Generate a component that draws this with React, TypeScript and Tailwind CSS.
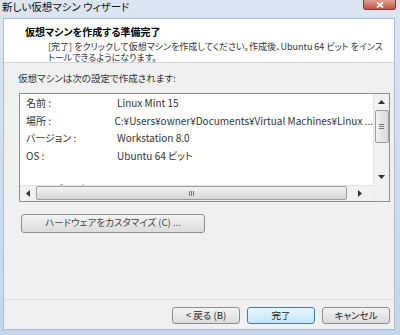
import React from "react";

const rows = [
  { label: "名前 :", value: "Linux Mint 15" },
  { label: "場所 :", value: "C:¥Users¥owner¥Documents¥Virtual Machines¥Linux ..." },
  { label: "バージョン :", value: "Workstation 8.0" },
  { label: "OS :", value: "Ubuntu 64 ビット" },
];

function Arrow({ dir }: { dir: "up" | "down" | "left" | "right" }) {
  const pts = {
    up: "0,4 3.5,0 7,4",
    down: "0,0 3.5,4 7,0",
    left: "4,0 0,3.5 4,7",
    right: "0,0 4,3.5 0,7",
  }[dir];
  const vertical = dir === "up" || dir === "down";
  return (
    <svg width={vertical ? 7 : 4} height={vertical ? 4 : 7} viewBox={vertical ? "0 0 7 4" : "0 0 4 7"}>
      <polygon points={pts} fill="#333" />
    </svg>
  );
}

function Button({ children, primary, className }: { children: React.ReactNode; primary?: boolean; className?: string }) {
  return (
    <div
      className={
        "flex items-center justify-center rounded-[3px] border text-[#222] " +
        (primary
          ? "border-[#3c7fb1] bg-gradient-to-b from-[#eaf6fd] to-[#bee6fd] "
          : "border-[#8e8f8f] bg-gradient-to-b from-[#f4f4f4] to-[#dcdcdc] ") +
        (className ?? "")
      }
    >
      {children}
    </div>
  );
}

export default function App() {
  return (
    <div className="w-[400px] h-[335px] overflow-hidden flex flex-col bg-gradient-to-b from-[#dbe6f2] to-[#c3d6ec] text-[10px] leading-none text-[#1a1a1a] [font-family:'Noto_Sans_CJK_JP',sans-serif] [font-feature-settings:'palt']">
      {/* title bar */}
      <div className="h-[18px] shrink-0 flex justify-between">
        <div className="pl-[2px] pt-[2px] text-[10.5px] text-[#111]">新しい仮想マシン ウィザード</div>
        <div className="mr-[4px] w-[33px] h-[10px] rounded-b-[3px] border border-t-0 border-[#8c3a2f] bg-gradient-to-b from-[#e0a196] to-[#c6503d] flex items-center justify-center">
          <svg width="8" height="6" viewBox="0 0 8 6">
            <path d="M1 0.5 L7 5.5 M7 0.5 L1 5.5" stroke="#fff" strokeWidth="1.8" />
          </svg>
        </div>
      </div>

      <div className="ml-[3px] mr-[5px] mb-[5px] flex-1 flex flex-col bg-[#f0f0f0] border border-[#a9bed6]">
        {/* header */}
        <div className="h-[44px] shrink-0 overflow-hidden bg-white border-b border-[#d5d5d5] pt-[8px]">
          <div className="pl-[21px] font-bold text-[10px] text-black">仮想マシンを作成する準備完了</div>
          <div className="pl-[44px] pt-[4px] text-[9px] leading-[11px] text-[#333] whitespace-nowrap">
            [完了] をクリックして仮想マシンを作成してください。作成後、Ubuntu 64 ビット をインス
            <br />
            トールできるようになります。
          </div>
        </div>

        {/* body */}
        <div className="flex-1 flex flex-col pl-[13px] pr-[4px]">
          <div className="pt-[11px] pl-[1px] text-[9.5px] text-[#333]">仮想マシンは次の設定で作成されます:</div>
          <div className="mt-[9px] ml-[2px] h-[109px] border border-[#8e8f8f] bg-white grid grid-cols-[1fr_16px] grid-rows-[1fr_16px]">
            <div className="overflow-hidden pl-[6px] pt-[1px]">
              {rows.map((r, i) => (
                <div key={i} className="h-[17.5px] flex items-center whitespace-nowrap text-[10px] text-[#333]">
                  <span className="w-[91px]">{r.label}</span>
                  <span>{r.value}</span>
                </div>
              ))}
              <div className="h-[16px]" />
              <div className="h-[17.5px] flex items-center whitespace-nowrap text-[10px] text-[#333]">
                <span className="w-[91px]">ハードディスク :</span>
                <span>20 GB</span>
              </div>
            </div>
            {/* vertical scrollbar */}
            <div className="bg-[#f1f1f1] border-l border-[#e4e4e4] flex flex-col items-center">
              <div className="h-[16px] flex items-center justify-center">
                <Arrow dir="up" />
              </div>
              <div className="w-[14px] h-[33px] rounded-[2px] border border-[#9c9c9c] bg-gradient-to-r from-[#f2f2f2] to-[#d8d8d8] flex flex-col items-center justify-center gap-[1px]">
                <div className="w-[5px] h-px bg-[#777]" />
                <div className="w-[5px] h-px bg-[#777]" />
                <div className="w-[5px] h-px bg-[#777]" />
              </div>
              <div className="flex-1" />
              <div className="h-[16px] flex items-center justify-center">
                <Arrow dir="down" />
              </div>
            </div>
            {/* horizontal scrollbar */}
            <div className="bg-[#f1f1f1] border-t border-[#e4e4e4] flex items-center">
              <div className="w-[16px] flex items-center justify-center">
                <Arrow dir="left" />
              </div>
              <div className="w-[311px] h-[14px] rounded-[2px] border border-[#9c9c9c] bg-gradient-to-b from-[#f4f4f4] to-[#d6d6d6] flex items-center justify-center gap-[1px]">
                <div className="w-px h-[5px] bg-[#777]" />
                <div className="w-px h-[5px] bg-[#777]" />
                <div className="w-px h-[5px] bg-[#777]" />
              </div>
              <div className="flex-1 flex items-center justify-center">
                <Arrow dir="right" />
              </div>
            </div>
            <div className="bg-[#f0f0f0]" />
          </div>

          <Button className="mt-[12px] ml-[4px] w-[184px] h-[19px] text-[9.5px] text-[#444]">
            ハードウェアをカスタマイズ (C) ...
          </Button>
        </div>

        {/* footer */}
        <div className="h-[30px] shrink-0 border-t border-[#dfdfdf] flex items-start justify-end gap-[7px] pt-[7px] pr-[4px]">
          <Button className="w-[68px] h-[17px] text-[9.5px]">&lt; 戻る (B)</Button>
          <Button primary className="w-[68px] h-[17px] text-[9.5px]">完了</Button>
          <Button className="w-[68px] h-[17px] text-[9.5px]">キャンセル</Button>
        </div>
      </div>
    </div>
  );
}
